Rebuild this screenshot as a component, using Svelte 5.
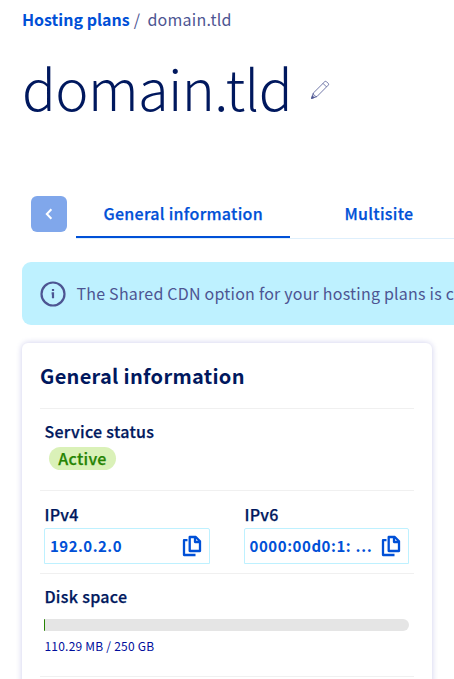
<script>
  const addresses = [
    { label: 'IPv4', value: '192.0.2.0' },
    { label: 'IPv6', value: '0000:00d0:1: …' }
  ];
  const used = 110.29;
  const total = 250 * 1000;
</script>

<main>
  <nav class="crumbs"><a href="#plans">Hosting plans</a><i>/</i><span>domain.tld</span></nav>

  <header>
    <h1>domain.tld</h1>
    <svg class="pencil" width="20" height="20" viewBox="0 0 20 20" fill="none" stroke="#4d5592" stroke-width=".8">
      <path d="M1.5 18.5 3.2 13.2 14.8 1.6Q15.7 1 16.5 1.7L18.3 3.5Q19 4.3 18.3 5.1L6.8 16.7ZM3.2 13.2 4.2 15.8 6.8 16.7M13 3.4 16.5 6.9" />
      <path d="M1.5 18.5 2.4 15.8 4.2 17.6Z" fill="#4d5592" />
    </svg>
  </header>

  <div class="tabs">
    <button aria-label="Previous">
      <svg width="8" height="12" viewBox="0 0 8 12" fill="none" stroke="#fff" stroke-width="2"><path d="M6.4 1.2 1.8 6l4.6 4.8" /></svg>
    </button>
    <div class="list">
      <a class="tab active" href="#general">General information</a>
      <a class="tab multi" href="#multisite">Multisite</a>
    </div>
  </div>

  <div class="alert">
    <svg width="26" height="26" viewBox="0 0 26 26" fill="none" stroke="#4d5592">
      <circle cx="13" cy="13" r="11.5" stroke-width="2.2" />
      <path d="M13 8v2.1M11.6 12.3H13v5" stroke-width="2.2" />
    </svg>
    <p>The Shared CDN option for your hosting plans is c</p>
  </div>

  <section class="card">
    <h2>General information</h2>
    <div class="row status">
      <h3>Service status</h3>
      <span class="badge">Active</span>
    </div>
    <div class="row ips">
      {#each addresses as { label, value }}
        <div class="ip">
          <h3>{label}</h3>
          <div class="field">
            <span>{value}</span>
            <svg width="20" height="22" viewBox="0 0 20 22" fill="none" stroke="#0050d7" stroke-width="2.3" stroke-linejoin="round">
              <path d="M7.7 2h6.1L18 6.2V16H7.7ZM13 2v5h5M5.5 5.2H2V20h11.5" />
            </svg>
          </div>
        </div>
      {/each}
    </div>
    <div class="row disk">
      <h3>Disk space</h3>
      <div class="bar"><div style="width: {(used / total) * 100}%"></div></div>
      <small>110.29 MB / 250 GB</small>
    </div>
    <div class="row"></div>
  </section>
</main>

<style>
  :global(body) { overflow: hidden; background: #fff; }
  main {
    box-sizing: border-box;
    width: 454px;
    height: 679px;
    overflow: hidden;
    padding: 7px 0 0 22px;
    font: 16px/24px "Noto Sans CJK SC", sans-serif;
    color: #00185e;
  }
  h1, h2, h3, p { margin: 0; }
  a { color: #0050d7; text-decoration: none; font-weight: 700; }
  .crumbs { display: flex; height: 24px; color: #4d5592; white-space: nowrap; }
  .crumbs i { font-style: normal; margin: 0 7.5px 0 4px; }
  .crumbs span { letter-spacing: .25px; }
  header { display: flex; height: 84px; margin-top: 14px; }
  h1 { font-size: 56px; line-height: 84px; font-weight: 300; letter-spacing: -.6px; white-space: nowrap; }
  .pencil { margin: 35px 0 0 18px; }
  .tabs { display: flex; height: 43px; margin: 67px 0 23px 9px; }
  .tabs button {
    display: flex; align-items: center; justify-content: center;
    width: 36px; height: 36px; padding: 0; border: 0; border-radius: 6px; background: #80a7eb;
  }
  .list { display: flex; flex: 1; margin-left: 9px; box-shadow: inset 0 -1px #deeffc; }
  .tab { box-sizing: border-box; height: 42px; padding: 5px 27.5px; white-space: nowrap; font-weight: 500; letter-spacing: .28px; -webkit-text-stroke: .25px; }
  .active { width: 214px; border-bottom: 2px solid #0050d7; }
  .multi { padding-left: 54.5px; }
  .alert {
    display: flex; align-items: center; box-sizing: border-box; height: 63px; padding-left: 18px;
    border-radius: 9px 0 0 9px; background: #bef1ff; color: #4d5592; overflow: hidden;
  }
  .alert svg { flex: none; }
  .alert p { margin: -1px 0 0 10.5px; white-space: nowrap; letter-spacing: .22px; }
  .card {
    box-sizing: border-box; width: 410px; height: 360px; margin-top: 18px; padding: 0 18px;
    border-radius: 6px; box-shadow: 0 0 6px rgba(0, 0, 160, .2);
  }
  h2 { height: 65px; font-size: 20px; line-height: 66px; font-weight: 700; letter-spacing: .3px; }
  h3 { padding-left: .4px; font-size: 16px; line-height: 24px; font-weight: 500; letter-spacing: .3px; -webkit-text-stroke: .25px; }
  .row { border-top: 1px solid #f0f0f0; box-sizing: border-box; padding: 10px 4px 0; }
  .status { height: 82px; }
  .badge {
    display: block; width: 67px; height: 23px; margin: 4px 0 0 5px; border-radius: 12px;
    background: #daf1b8; color: #268403; text-align: center; line-height: 23px; font-weight: 500;
    letter-spacing: .3px; -webkit-text-stroke: .25px;
  }
  .ips { display: flex; gap: 34px; height: 83px; padding-top: 11px; }
  .field {
    display: flex; align-items: center; justify-content: space-between; box-sizing: border-box;
    width: 166px; height: 36px; margin-top: 2px; padding: 0 7px 0 5px; border: 1px solid #bef1ff;
    border-radius: 2px 2px 0 0; color: #0050d7; font-size: 15px; font-weight: 700; white-space: nowrap;
    letter-spacing: .48px;
  }
  .ip:last-child .field { width: 165px; padding-left: 4.5px; letter-spacing: .56px; }
  .disk { height: 103px; }
  .bar { height: 12px; width: 365px; margin-top: 11px; overflow: hidden; border-radius: 1px 6px 6px 1px; background: #e5e5e5; }
  .bar div { min-width: 1px; height: 12px; background: #268403; }
  small { display: block; margin-top: 5px; padding-left: .4px; font-size: 12px; line-height: 20px; letter-spacing: .23px; color: #000e9c; }
</style>
